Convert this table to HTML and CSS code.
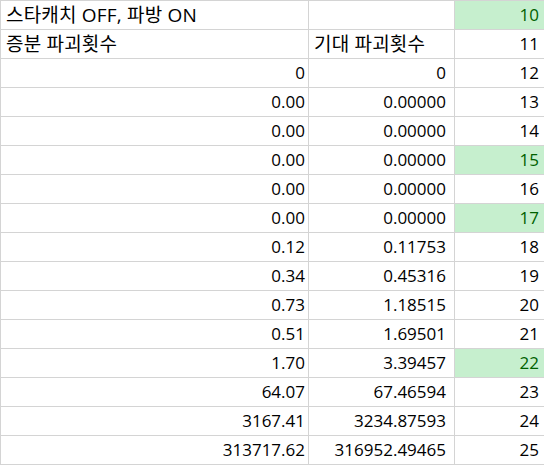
FILE: index.html
```html
<!DOCTYPE html>
<html lang="ko">
<head>
<meta charset="utf-8">
<link rel="stylesheet" href="styles.css">
</head>
<body>
<table class="sheet">
  <colgroup>
    <col class="c1"><col class="c2"><col class="c3">
  </colgroup>
  <tr><td class="txt">스타캐치 OFF, 파방 ON</td><td></td><td class="idx good">10</td></tr>
  <tr><td class="txt">증분 파괴횟수</td><td class="txt">기대 파괴횟수</td><td class="idx">11</td></tr>
  <tr><td class="num">0</td><td class="num n2">0</td><td class="idx">12</td></tr>
  <tr><td class="num">0.00</td><td class="num n2">0.00000</td><td class="idx">13</td></tr>
  <tr><td class="num">0.00</td><td class="num n2">0.00000</td><td class="idx">14</td></tr>
  <tr><td class="num">0.00</td><td class="num n2">0.00000</td><td class="idx good">15</td></tr>
  <tr><td class="num">0.00</td><td class="num n2">0.00000</td><td class="idx">16</td></tr>
  <tr><td class="num">0.00</td><td class="num n2">0.00000</td><td class="idx good">17</td></tr>
  <tr><td class="num">0.12</td><td class="num n2">0.11753</td><td class="idx">18</td></tr>
  <tr><td class="num">0.34</td><td class="num n2">0.45316</td><td class="idx">19</td></tr>
  <tr><td class="num">0.73</td><td class="num n2">1.18515</td><td class="idx">20</td></tr>
  <tr><td class="num">0.51</td><td class="num n2">1.69501</td><td class="idx">21</td></tr>
  <tr><td class="num">1.70</td><td class="num n2">3.39457</td><td class="idx good">22</td></tr>
  <tr><td class="num">64.07</td><td class="num n2">67.46594</td><td class="idx">23</td></tr>
  <tr><td class="num">3167.41</td><td class="num n2">3234.87593</td><td class="idx">24</td></tr>
  <tr><td class="num">313717.62</td><td class="num n2">316952.49465</td><td class="idx">25</td></tr>
</table>
</body>
</html>
```

FILE: styles.css
```css
html, body {
  margin: 0;
  padding: 0;
  background: #ffffff;
}

.sheet {
  border-collapse: collapse;
  table-layout: fixed;
  width: 544px;
  font-family: "Open Sans", "Noto Sans CJK KR", sans-serif;
  font-size: 17px;
  color: #000000;
}

.c1 { width: 308px; }
.c2 { width: 146px; }
.c3 { width: 90px; }

.sheet td {
  height: 28px;
  padding: 0;
  border: 1px solid #d4d4d4;
  white-space: nowrap;
  overflow: hidden;
  line-height: 28px;
  vertical-align: middle;
}

.txt {
  text-align: left;
  padding-left: 5px !important;
  font-family: "Open Sans", "Noto Sans CJK KR", sans-serif;
  font-size: 19px;
  letter-spacing: 0.2px;
}

.num {
  text-align: right;
  padding-right: 3px !important;
}

.num.n2 {
  padding-right: 8px !important;
}

.idx {
  text-align: right;
  padding-right: 5px !important;
}

.good {
  background: #c6efce;
  color: #006100;
}
```
